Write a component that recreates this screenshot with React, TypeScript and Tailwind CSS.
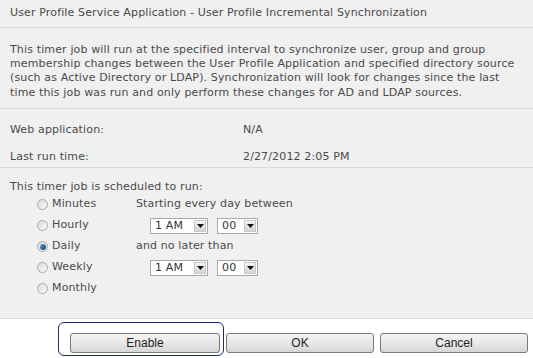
import React from "react";

function Radio({ checked }: { checked?: boolean }) {
  return (
    <span className="relative inline-flex h-[11px] w-[11px] shrink-0 items-center justify-center rounded-full border border-[#a8a8a8] bg-gradient-to-br from-[#d9d9d9] to-[#fbfbfb]">
      {checked && (
        <span className="h-[6px] w-[6px] rounded-full bg-gradient-to-br from-[#5aa0d0] to-[#0f3f6a]" />
      )}
    </span>
  );
}

function Select({ value, w }: { value: string; w: string }) {
  return (
    <div
      className={`flex h-[16px] items-center justify-between border border-[#a9a9a9] bg-white pl-[4px] pr-[1px] text-[#333] ${w}`}
    >
      <span className="leading-none">{value}</span>
      <span className="flex h-[12px] w-[12px] items-center justify-center border border-[#c8c8c8] bg-gradient-to-b from-[#f4f4f4] to-[#d4d4d4]">
        <svg width="7" height="4" viewBox="0 0 7 4">
          <path d="M0 0 H7 L3.5 4 Z" fill="#111" />
        </svg>
      </span>
    </div>
  );
}

function Btn({ label, w }: { label: string; w: string }) {
  return (
    <div
      className={`flex h-[20px] items-center justify-center rounded-[3px] border border-[#7a7a7a] bg-gradient-to-b from-[#f3f3f3] via-[#e8e8e8] to-[#d6d6d6] text-[12px] tracking-normal text-[#1e1e1e] ${w}`}
      style={{ fontFamily: "'Liberation Sans', Arial, sans-serif" }}
    >
      {label}
    </div>
  );
}

export default function App() {
  const radios = ["Minutes", "Hourly", "Daily", "Weekly", "Monthly"];
  return (
    <div
      className="flex h-[358px] w-[533px] flex-col overflow-hidden bg-white text-[11px] tracking-[0.14px] text-[#4a4a4a]"
      style={{ fontFamily: "'DejaVu Sans', Verdana, sans-serif" }}
    >
      <div className="flex h-[28px] items-center border-b border-[#d9d9d9] bg-[#f0f0f0] pl-[10px] pb-[1px]">
        User Profile Service Application - User Profile Incremental Synchronization
      </div>
      <div className="h-[81px] whitespace-nowrap border-b border-[#d9d9d9] bg-[#f0f0f0] pl-[10px] pt-[15px] leading-[14.2px]">
        This timer job will run at the specified interval to synchronize user, group and group
        <br />
        membership changes between the User Profile Application and specified directory source
        <br />
        (such as Active Directory or LDAP). Synchronization will look for changes since the last
        <br />
        time this job was run and only perform these changes for AD and LDAP sources.
      </div>
      <div className="h-[59px] border-b border-[#d9d9d9] bg-[#f0f0f0] pl-[10px] pt-[14px] leading-[14px]">
        <div className="grid grid-cols-[233px_1fr] gap-y-[13px]">
          <span>Web application:</span>
          <span>N/A</span>
          <span>Last run time:</span>
          <span>2/27/2012 2:05 PM</span>
        </div>
      </div>
      <div className="h-[151px] border-b border-[#dcdcdc] bg-[#f0f0f0] pl-[10px] pt-[12px]">
        <div className="leading-[14px]">This timer job is scheduled to run:</div>
        <div className="grid grid-cols-[99px_1fr] pl-[27px]">
          <div className="flex flex-col">
            {radios.map((r, i) => (
              <div key={r} className="flex h-[21px] items-center gap-[4px]">
                <Radio checked={i === 2} />
                <span>{r}</span>
              </div>
            ))}
          </div>
          <div className="flex flex-col">
            <div className="flex h-[21px] items-center">Starting every day between</div>
            <div className="flex h-[21px] items-center gap-[9px] pl-[14px]">
              <Select value="1 AM" w="w-[58px]" />
              <Select value="00" w="w-[41px]" />
            </div>
            <div className="flex h-[21px] items-center">and no later than</div>
            <div className="flex h-[21px] items-center gap-[9px] pl-[14px]">
              <Select value="1 AM" w="w-[58px]" />
              <Select value="00" w="w-[41px]" />
            </div>
          </div>
        </div>
      </div>
      <div className="flex gap-[6px] pl-[70px] pt-[14px]">
        <div className="relative">
          <div className="absolute -left-[12px] -top-[11px] h-[34px] w-[166px] rounded-[6px] border border-[#1f2a6e]" />
          <Btn label="Enable" w="w-[150px]" />
        </div>
        <Btn label="OK" w="w-[148px]" />
        <Btn label="Cancel" w="w-[148px]" />
      </div>
    </div>
  );
}
